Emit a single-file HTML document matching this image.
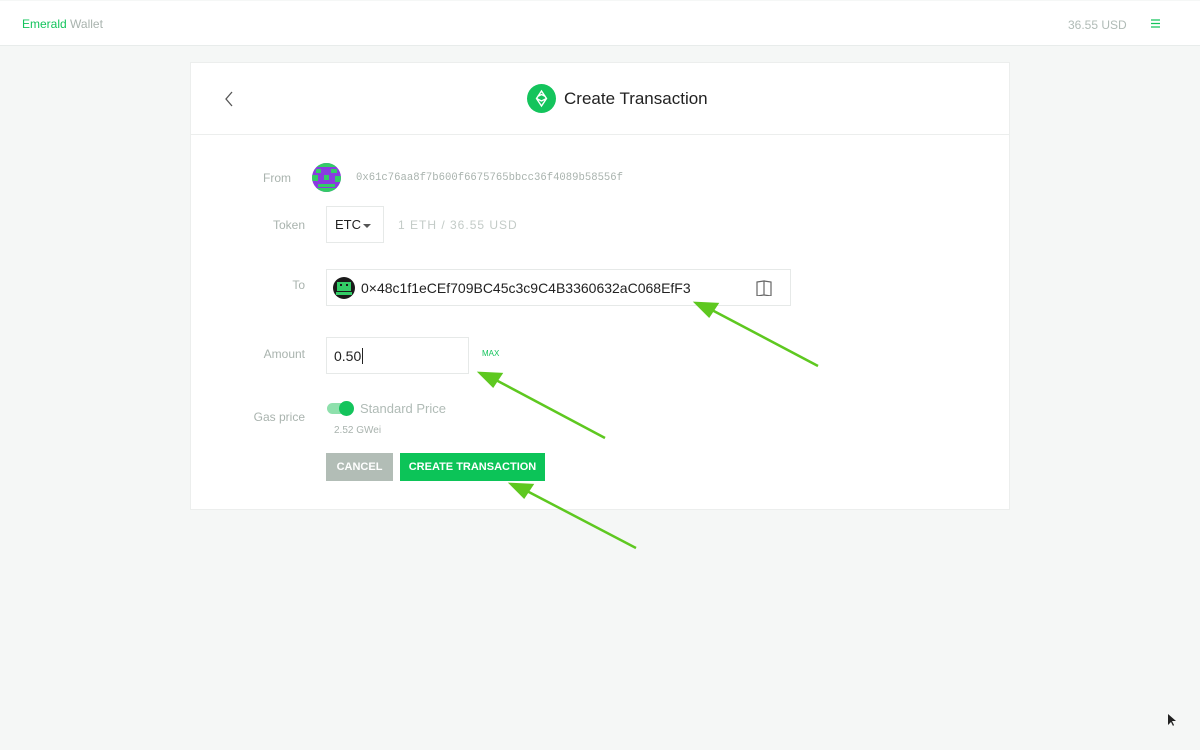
<!DOCTYPE html>
<html><head><meta charset="utf-8">
<style>
*{box-sizing:border-box;margin:0;padding:0}
body{width:1200px;height:750px;background:#f5f7f6;font-family:"Liberation Sans",sans-serif;position:relative;overflow:hidden}
.top{position:absolute;left:0;top:1px;width:1200px;height:45px;background:#fff;border-bottom:1px solid #e8eceb}
.brand{position:absolute;left:22px;top:16px;font-size:12px}
.usd{position:absolute;left:1068px;top:17px;font-size:12px;color:#b0bbb6}
.card{position:absolute;left:190px;top:62px;width:820px;height:448px;background:#fff;border:1px solid #eceeed}
.hdr{height:72px;border-bottom:1px solid #eceeed;position:relative}
.lbl{position:absolute;font-size:12px;color:#a9b3ae;text-align:right;width:80px}
.box{position:absolute;border:1px solid #e6e9e8;background:#fff}
.btn{position:absolute;height:28px;color:#fff;font-size:11px;font-weight:bold;display:flex;align-items:center;justify-content:center}
</style></head><body>
<div class="top">
<div class="brand"><span style="color:#14c45c">Emerald</span> <span style="color:#a9b3ae">Wallet</span></div>
<div class="usd">36.55 USD</div>
<svg style="position:absolute;left:1151px;top:18px" width="9" height="9"><path d="M0 1h9M0 4.5h9M0 8h9" stroke="#14c45c" stroke-width="1.2"/></svg>
</div>
<div class="card">
<div class="hdr">
<svg style="position:absolute;left:33px;top:28px" width="10" height="16"><path d="M8 1L2 8l6 7" stroke="#555" stroke-width="1.3" fill="none"/></svg>
<svg style="position:absolute;left:336px;top:21px" width="29" height="29"><circle cx="14.5" cy="14.5" r="14.5" fill="#14c45c"/><path d="M14.5 7l-5 7.5 5 7.5 5-7.5z M9.5 14.5l5 2.5 5-2.5 M10.5 12.5l4-2 4 2" stroke="#fff" stroke-width="1.4" fill="none"/></svg>
<div style="position:absolute;left:373px;top:26px;font-size:17px;color:#222">Create Transaction</div>
</div>
<div class="lbl" style="left:20px;top:108px">From</div>
<svg style="position:absolute;left:121px;top:100px" width="29" height="29"><defs><clipPath id="c"><circle cx="14.5" cy="14.5" r="14.5"/></clipPath></defs><g clip-path="url(#c)"><rect width="29" height="29" fill="#8a3be0"/><rect x="0" y="0" width="29" height="4" fill="#33cc66"/><rect x="4" y="6" width="5" height="4" fill="#33cc66"/><rect x="19" y="6" width="6" height="4" fill="#33cc66"/><rect x="0" y="12" width="6" height="6" fill="#33cc66"/><rect x="12" y="12" width="5" height="5" fill="#33cc66"/><rect x="23" y="13" width="6" height="6" fill="#33cc66"/><rect x="6" y="21" width="17" height="3" fill="#33cc66"/><rect x="0" y="25" width="29" height="4" fill="#33cc66"/></g></svg>
<div style="position:absolute;left:165px;top:109px;font-family:'Liberation Mono',monospace;font-size:10.6px;color:#a9b3ae">0x61c76aa8f7b600f6675765bbcc36f4089b58556f</div>
<div class="lbl" style="left:34px;top:155px">Token</div>
<div class="box" style="left:135px;top:143px;width:58px;height:37px"><span style="position:absolute;left:8px;top:10px;font-size:13px;color:#222">ETC</span><svg style="position:absolute;left:36px;top:17px" width="8" height="4"><path d="M0 0h8L4 4z" fill="#555"/></svg></div>
<div style="position:absolute;left:207px;top:155px;font-size:12px;color:#c3cbc7;letter-spacing:1px">1 ETH / 36.55 USD</div>
<div class="lbl" style="left:34px;top:215px">To</div>
<div class="box" style="left:135px;top:206px;width:465px;height:37px">
<svg style="position:absolute;left:6px;top:7px" width="22" height="22"><defs><clipPath id="d"><circle cx="11" cy="11" r="11"/></clipPath></defs><g clip-path="url(#d)"><rect width="22" height="22" fill="#1a1a1a"/><rect x="4" y="5" width="14" height="9" fill="#33cc66"/><rect x="7" y="7" width="2" height="2" fill="#1a1a1a"/><rect x="13" y="7" width="2" height="2" fill="#1a1a1a"/><rect x="3" y="15" width="16" height="3" fill="#33cc66"/></g></svg>
<span style="position:absolute;left:34px;top:10px;font-size:14px;color:#222">0×48c1f1eCEf709BC45c3c9C4B3360632aC068EfF3</span>
<svg style="position:absolute;left:429px;top:10px" width="17" height="16"><path d="M1 2l7-1v14l-7 1z M8 1l7 1v14l-7-1" stroke="#666" stroke-width="1.2" fill="none"/></svg>
</div>
<div class="lbl" style="left:34px;top:284px">Amount</div>
<div class="box" style="left:135px;top:274px;width:143px;height:37px"><span style="position:absolute;left:7px;top:10px;font-size:14px;color:#222">0.50<span style="border-left:1px solid #222;margin-left:1px"></span></span></div>
<div style="position:absolute;left:291px;top:286px;font-size:8px;color:#14c45c">MAX</div>
<div class="lbl" style="left:34px;top:347px">Gas price</div>
<div style="position:absolute;left:136px;top:340px;width:26px;height:11px;border-radius:6px;background:#8ee0ac"></div>
<div style="position:absolute;left:148px;top:338px;width:15px;height:15px;border-radius:50%;background:#14c45c"></div>
<div style="position:absolute;left:169px;top:338px;font-size:13px;color:#b0bbb6">Standard Price</div>
<div style="position:absolute;left:143px;top:362px;font-size:10px;color:#a9b3ae">2.52 GWei</div>
<div class="btn" style="left:135px;top:390px;width:67px;background:#b2bdb6">CANCEL</div>
<div class="btn" style="left:209px;top:390px;width:145px;background:#0cc458">CREATE TRANSACTION</div>
</div>
<svg style="position:absolute;left:0;top:0" width="1200" height="750">
<g stroke="#5ec820" stroke-width="2.5" fill="#5ec820">
<path d="M818 366L710 309" fill="none"/><path d="M696 303l21 1-8 12z"/>
<path d="M605 438L494 379" fill="none"/><path d="M480 373l21 1-8 12z"/>
<path d="M636 548L525 490" fill="none"/><path d="M511 484l21 1-8 12z"/>
</g>
<path d="M1168 714l0 11 3-3 2 4 1-1-2-4 4 0z" fill="#222"/>
</svg>
</body></html>
